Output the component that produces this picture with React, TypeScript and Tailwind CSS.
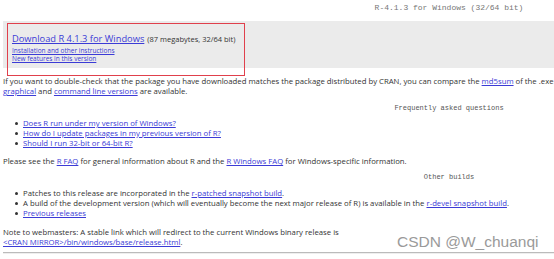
import React from 'react';

const LINK = 'text-[#3b3bd6] underline';

function Faq({ children }: { children: React.ReactNode }) {
  return (
    <li className="flex items-center h-[10px] leading-[10px]">
      <span className="ml-[15px] mr-[5px] h-[3px] w-[3px] rounded-full bg-[#333]" />
      {children}
    </li>
  );
}

export default function App() {
  return (
    <div className="relative h-[259px] w-[554px] overflow-hidden bg-white text-[#333] font-['Open_Sans','Noto_Sans',sans-serif]">
      <div className="w-[898px]">
        {/* page title */}
        <div className="h-[21px] pt-[3px] text-center font-['Liberation_Mono',monospace] text-[8px] leading-[10px] text-[#777]">
          R-4.1.3 for Windows (32/64 bit)
        </div>

        {/* download box */}
        <div className="ml-[3px] h-[47px] bg-[#ebebeb] pl-[9px] pt-[8px]">
          <div className="h-[14px] leading-[14px] whitespace-nowrap">
            <a className={`${LINK} text-[9.3px]`}>Download R 4.1.3 for Windows</a>
            <span className="ml-[3px] text-[7.5px]">(87 megabytes, 32/64 bit)</span>
          </div>
          <div className="mt-[4px] text-[6.5px] leading-[8px]">
            <div><a className={LINK}>Installation and other instructions</a></div>
            <div><a className={LINK}>New features in this version</a></div>
          </div>
        </div>

        <div className="ml-[3px] mt-[8px] text-[7.75px] leading-[10px] whitespace-nowrap">
          <div>
            If you want to double-check that the package you have downloaded matches the package distributed by CRAN, you can compare the{' '}
            <a className={LINK}>md5sum</a> of the .exe to the fingerprint on the master server. You will need a version of md5sum for windows: both
          </div>
          <div>
            <a className={LINK}>graphical</a> and <a className={LINK}>command line versions</a> are available.
          </div>
        </div>

        <div className="mt-[7px] text-center font-['Liberation_Mono',monospace] text-[7px] leading-[10px] text-[#555]">
          Frequently asked questions
        </div>

        <ul className="mt-[5px] text-[7.75px] whitespace-nowrap">
          <Faq><a className={LINK}>Does R run under my version of Windows?</a></Faq>
          <Faq><a className={LINK}>How do I update packages in my previous version of R?</a></Faq>
          <Faq><a className={LINK}>Should I run 32-bit or 64-bit R?</a></Faq>
        </ul>

        <div className="ml-[3px] mt-[8px] text-[7.75px] leading-[10px] whitespace-nowrap">
          Please see the <a className={LINK}>R FAQ</a> for general information about R and the{' '}
          <a className={LINK}>R Windows FAQ</a> for Windows-specific information.
        </div>

        <div className="mt-[6px] text-center font-['Liberation_Mono',monospace] text-[7px] leading-[10px] text-[#555]">
          Other builds
        </div>

        <ul className="mt-[6px] text-[7.75px] whitespace-nowrap">
          <Faq>
            <span>
              Patches to this release are incorporated in the <a className={LINK}>r-patched snapshot build</a>.
            </span>
          </Faq>
          <Faq>
            <span>
              A build of the development version (which will eventually become the next major release of R) is available in the{' '}
              <a className={LINK}>r-devel snapshot build</a>.
            </span>
          </Faq>
          <Faq><a className={LINK}>Previous releases</a></Faq>
        </ul>

        <div className="ml-[3px] mt-[10px] text-[7.75px] leading-[9.5px] whitespace-nowrap">
          <div>Note to webmasters: A stable link which will redirect to the current Windows binary release is</div>
          <div>
            <a className={LINK}>&lt;CRAN MIRROR&gt;/bin/windows/base/release.html</a>.
          </div>
        </div>

        <div className="ml-[3px] mt-[5px] h-[2px] border-t border-[#bbb] bg-[#eee]" />
      </div>

      {/* screenshot annotation */}
      <div className="absolute left-[7px] top-[23px] h-[53px] w-[238px] border border-[#e0404c]" />
      <div className="absolute left-[397px] top-[233px] font-['Liberation_Sans',sans-serif] text-[15.5px] leading-[18px] text-[#9a9a9a]">
        CSDN @W_chuanqi
      </div>
    </div>
  );
}
